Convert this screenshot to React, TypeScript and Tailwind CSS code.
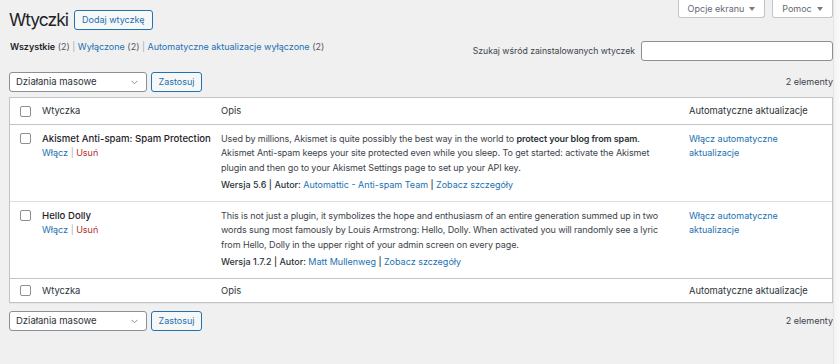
import React from "react";

function Tab({ label, w }: { label: string; w: string }) {
  return (
    <div
      className={`${w} h-[18px] bg-white border border-t-0 border-[#c3c4c7] rounded-b-[3px] text-[#646970] text-[9px] flex items-center justify-center gap-[5px]`}
    >
      <span>{label}</span>
      <svg width="6" height="4" viewBox="0 0 6 4">
        <path d="M0 0 L6 0 L3 4 Z" fill="#787c82" />
      </svg>
    </div>
  );
}

function Check() {
  return <span className="block w-[11px] h-[11px] border border-[#8c8f94] rounded-[2px] bg-white" />;
}

function Bulk({ right }: { right: string }) {
  return (
    <div className="flex items-center justify-between h-[20px]">
      <div className="flex items-center gap-[4px]">
        <div className="w-[138px] h-[20px] border border-[#8c8f94] rounded-[3px] bg-white flex items-center justify-between pl-[6px] pr-[8px] text-[#2c3338] text-[9.5px]">
          <span>Działania masowe</span>
          <svg width="7" height="5" viewBox="0 0 7 5">
            <path d="M0.5 0.8 L3.5 3.8 L6.5 0.8" fill="none" stroke="#8c8f94" strokeWidth="1" />
          </svg>
        </div>
        <div className="w-[51px] h-[20px] border border-[#2271b1] rounded-[3px] bg-[#f6f7f7] flex items-center justify-center text-[#2271b1] text-[9px]">
          Zastosuj
        </div>
      </div>
      <span className="text-[#3c434a] text-[9px]">{right}</span>
    </div>
  );
}

function HeadRow({ top }: { top?: boolean }) {
  return (
    <div
      className={`grid grid-cols-[24px_179px_468px_1fr] items-center text-[9.4px] text-[#2c3338] ${
        top ? "h-[27px] border-b border-[#c3c4c7]" : "h-[23px]"
      }`}
    >
      <div className="pl-[10px]">
        <Check />
      </div>
      <div className="pl-[8px]">Wtyczka</div>
      <div className="pl-[8px]">Opis</div>
      <div className="pl-[8px]">Automatyczne aktualizacje</div>
    </div>
  );
}

function PluginRow({
  name,
  lines,
  version,
  author,
  border,
}: {
  name: string;
  lines: React.ReactNode[];
  version: string;
  author: string;
  border: string;
}) {
  return (
    <div className={`grid grid-cols-[24px_179px_468px_1fr] h-[77px] border-b ${border}`}>
      <div className="pl-[10px] pt-[8px]">
        <Check />
      </div>
      <div className="pl-[8px] pt-[7px] whitespace-nowrap">
        <div className="font-medium text-[9.6px] text-[#1d2327] leading-[14px]">{name}</div>
        <div className="leading-[14px]">
          <span className="text-[#2271b1]">Włącz</span>
          <span className="text-[#a7aaad]"> | </span>
          <span className="text-[#b32d2e]">Usuń</span>
        </div>
      </div>
      <div className="pl-[8px] pt-[7px] whitespace-nowrap">
        <div className="leading-[14.3px] tracking-[-0.1px]">
          {lines.map((l, i) => (
            <div key={i}>{l}</div>
          ))}
        </div>
        <div className="mt-[3px] leading-[14px]">
          <span className="font-medium text-[#2c3338]">Wersja {version} | Autor: </span>
          <span className="text-[#2271b1]">{author}</span>
          <span className="font-medium text-[#2c3338]"> | </span>
          <span className="text-[#2271b1]">Zobacz szczegóły</span>
        </div>
      </div>
      <div className="pl-[8px] pt-[7px] leading-[14.3px] text-[#2271b1]">
        <div>Włącz automatyczne</div>
        <div>aktualizacje</div>
      </div>
    </div>
  );
}

export default function App() {
  return (
    <div className="flex min-h-[364px] w-[840px] bg-[#f0f0f1] font-['Inter',sans-serif] text-[#3c434a] text-[9px] leading-[14px]">
      <div className="w-[833px] pl-[9px]">
        <div className="flex justify-between items-start h-[40px]">
          <div className="flex items-center gap-[6px] pt-[9px]">
            <h1 className="text-[17.5px] leading-[21px] text-[#1d2327] tracking-[-1px]">Wtyczki</h1>
            <div className="h-[20px] px-[7px] rounded-[3px] border border-[#2271b1] text-[#2271b1] bg-[#f6f7f7] text-[9px] flex items-center">
              Dodaj wtyczkę
            </div>
          </div>
          <div className="flex gap-[7px]">
            <Tab label="Opcje ekranu" w="w-[87px]" />
            <Tab label="Pomoc" w="w-[61px]" />
          </div>
        </div>

        <div className="flex justify-between items-start h-[20px]">
          <div className="pl-[1px]">
            <span className="font-semibold text-[#1d2327]">Wszystkie</span>
            <span className="text-[#50575e]"> (2)</span>
            <span className="text-[#a7aaad]"> | </span>
            <span className="text-[#2271b1]">Wyłączone</span>
            <span className="text-[#50575e]"> (2)</span>
            <span className="text-[#a7aaad]"> | </span>
            <span className="text-[#2271b1]">Automatyczne aktualizacje wyłączone</span>
            <span className="text-[#50575e]"> (2)</span>
          </div>
          <div className="flex items-center gap-[6px] mt-[1px]">
            <span className="text-[#3c434a] text-[8.7px]">Szukaj wśród zainstalowanych wtyczek</span>
            <div className="w-[192px] h-[20px] bg-white border border-[#8c8f94] rounded-[3px]" />
          </div>
        </div>

        <div className="mt-[12px]">
          <Bulk right="2 elementy" />
        </div>

        <div className="mt-[5px] bg-white border border-[#c3c4c7] shadow-[0_1px_1px_rgba(0,0,0,0.04)]">
          <HeadRow top />
          <PluginRow
            name="Akismet Anti-spam: Spam Protection"
            border="border-[#dcdcde]"
            lines={[
              <>
                Used by millions, Akismet is quite possibly the best way in the world to{" "}
                <strong className="font-semibold text-[#2c3338]">protect your blog from spam</strong>.
              </>,
              "Akismet Anti-spam keeps your site protected even while you sleep. To get started: activate the Akismet",
              "plugin and then go to your Akismet Settings page to set up your API key.",
            ]}
            version="5.6"
            author="Automattic - Anti-spam Team"
          />
          <PluginRow
            name="Hello Dolly"
            border="border-[#c3c4c7]"
            lines={[
              "This is not just a plugin, it symbolizes the hope and enthusiasm of an entire generation summed up in two",
              "words sung most famously by Louis Armstrong: Hello, Dolly. When activated you will randomly see a lyric",
              "from Hello, Dolly in the upper right of your admin screen on every page.",
            ]}
            version="1.7.2"
            author="Matt Mullenweg"
          />
          <HeadRow />
        </div>

        <div className="mt-[8px]">
          <Bulk right="2 elementy" />
        </div>
      </div>
      <div className="w-[7px] bg-gradient-to-r from-[#f4f4f4] to-[#fafafa] border-l border-[#e4e4e4]" />
    </div>
  );
}
